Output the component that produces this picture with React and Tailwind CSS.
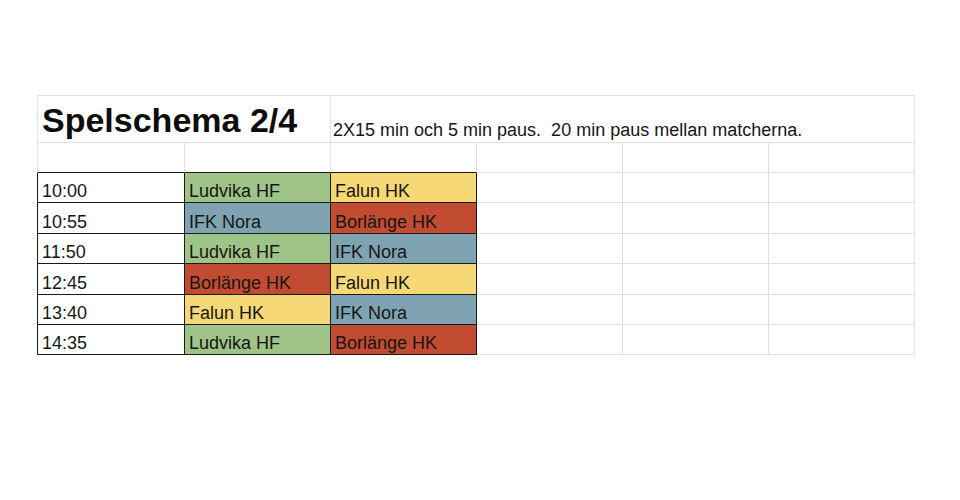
const times = [
  { time: "10:00", home: "Ludvika HF", away: "Falun HK", h: "h-[30px]" },
  { time: "10:55", home: "IFK Nora", away: "Borlänge HK", h: "h-[31px]" },
  { time: "11:50", home: "Ludvika HF", away: "IFK Nora", h: "h-[30px]" },
  { time: "12:45", home: "Borlänge HK", away: "Falun HK", h: "h-[31px]" },
  { time: "13:40", home: "Falun HK", away: "IFK Nora", h: "h-[30px]" },
  { time: "14:35", home: "Ludvika HF", away: "Borlänge HK", h: "h-[30px]" },
];

// team colours as in the sheet
const teamColor = {
  "Ludvika HF": "bg-[#9fc487]",
  "IFK Nora": "bg-[#7fa3b0]",
  "Borlänge HK": "bg-[#c24c32]",
  "Falun HK": "bg-[#f7d876]",
};

const cellText = "flex items-end pl-[4px] pb-[2px] text-[18px] leading-[18px] text-[#161616] whitespace-nowrap overflow-hidden";

export default function App() {
  return (
    <div className="w-[960px] h-[500px] bg-white font-['Liberation_Sans',Arial,sans-serif]">
      <div className="pt-[95px] pl-[37px]">
        <div className="grid grid-cols-[148px_146px_146px_146px_146px_146px] w-[878px]">
          {/* header row */}
          <div className="col-span-2 h-[48px] border border-[#e0e0e0] flex items-end pl-[4px] pb-[5px]">
            <span className="text-[34px] leading-[34px] font-bold text-[#0d0d0d]">Spelschema 2/4</span>
          </div>
          <div className="col-span-4 h-[48px] border-t border-r border-b border-[#e0e0e0] flex items-end pl-[2px] pb-[3px]">
            <span className="text-[18px] leading-[18px] text-[#161616] whitespace-pre">
              2X15 min och 5 min paus.  20 min paus mellan matcherna.
            </span>
          </div>

          {/* empty row */}
          <div className="h-[30px] border-l border-r border-r-[#e0e0e0] border-l-[#e0e0e0] border-b border-b-[#1a1a1a]"></div>
          <div className="h-[30px] border-r border-r-[#e0e0e0] border-b border-b-[#1a1a1a]"></div>
          <div className="h-[30px] border-r border-r-[#e0e0e0] border-b border-b-[#1a1a1a]"></div>
          <div className="h-[30px] border-r border-b border-[#e0e0e0]"></div>
          <div className="h-[30px] border-r border-b border-[#e0e0e0]"></div>
          <div className="h-[30px] border-r border-b border-[#e0e0e0]"></div>

          {/* matches */}
          {times.map((m) => (
            <div key={m.time} className="contents">
              <div className={`${m.h} ${cellText} border-l border-r border-b border-[#1a1a1a] bg-white`}>{m.time}</div>
              <div className={`${m.h} ${cellText} border-r border-b border-[#1a1a1a] ${teamColor[m.home]}`}>{m.home}</div>
              <div className={`${m.h} ${cellText} border-r border-b border-[#1a1a1a] ${teamColor[m.away]}`}>{m.away}</div>
              <div className={`${m.h} border-r border-b border-[#e0e0e0]`}></div>
              <div className={`${m.h} border-r border-b border-[#e0e0e0]`}></div>
              <div className={`${m.h} border-r border-b border-[#e0e0e0]`}></div>
            </div>
          ))}
        </div>
      </div>
    </div>
  );
}
